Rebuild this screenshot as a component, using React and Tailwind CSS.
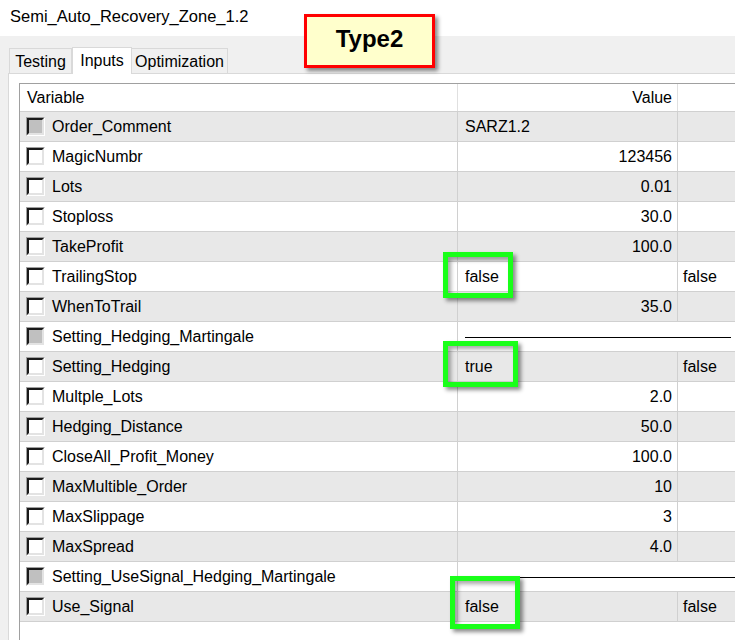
import React from "react";

const rows = [
    { name: "Order_Comment", value: "SARZ1.2", align: "left", disabled: true },
    { name: "MagicNumbr", value: "123456" },
    { name: "Lots", value: "0.01" },
    { name: "Stoploss", value: "30.0" },
    { name: "TakeProfit", value: "100.0" },
    { name: "TrailingStop", value: "false", align: "left", extra: "false" },
    { name: "WhenToTrail", value: "35.0" },
    { name: "Setting_Hedging_Martingale", separator: "pl-[7px] pr-[4px]", disabled: true },
    { name: "Setting_Hedging", value: "true", align: "left", extra: "false" },
    { name: "Multple_Lots", value: "2.0" },
    { name: "Hedging_Distance", value: "50.0" },
    { name: "CloseAll_Profit_Money", value: "100.0" },
    { name: "MaxMultible_Order", value: "10" },
    { name: "MaxSlippage", value: "3" },
    { name: "MaxSpread", value: "4.0" },
    { name: "Setting_UseSignal_Hedging_Martingale", separator: "pl-[10px] pr-0", disabled: true },
    { name: "Use_Signal", value: "false", align: "left", extra: "false" },
];

const CheckBox = ({ disabled }) => (
    <div className="w-[19px] h-[19px] border border-t-[#a0a0a0] border-l-[#a0a0a0] border-b-white border-r-white">
        <div
            className={`w-full h-full border-2 border-t-[#1a1a1a] border-l-[#1a1a1a] border-b-[#e3e3e3] border-r-[#e3e3e3] ${
                disabled ? "bg-[#c0c0c0]" : "bg-white"
            }`}
        />
    </div>
);

const GreenBox = ({ className }) => (
    <div
        className={`absolute border-[5px] border-[#19ff19] shadow-[3px_3px_4px_rgba(0,0,0,0.45),inset_3px_3px_4px_rgba(0,0,0,0.35)] ${className}`}
    />
);

const Row = ({ row, index }) => {
    const bg = index % 2 === 0 ? "bg-[#e8e8e8]" : "bg-white";
    return (
        <div className={`flex h-[30px] border-b border-[#d0d0d0] ${bg}`}>
            <div className="w-[438px] shrink-0 flex items-center gap-[7px] pl-[6px] border-r border-[#d0d0d0]">
                <CheckBox disabled={row.disabled} />
                <span className="whitespace-nowrap">{row.name}</span>
            </div>
            {row.separator ? (
                <div className={`flex-1 flex items-center pt-[2px] ${row.separator}`}>
                    <div className="w-full h-px bg-black" />
                </div>
            ) : (
                <>
                    <div
                        className={`w-[220px] shrink-0 flex items-center border-r border-[#d0d0d0] ${
                            row.align === "left" ? "justify-start pl-[7px]" : "justify-end pr-[5px]"
                        }`}
                    >
                        {row.value}
                    </div>
                    <div className="flex-1 flex items-center pl-[5px]">{row.extra}</div>
                </>
            )}
        </div>
    );
};

const App = () => {
    return (
        <div className="relative w-[735px] h-[640px] overflow-hidden bg-[#f0f0f0] text-[16px] text-black font-['Liberation_Sans',Arial,sans-serif]">
            <div className="h-[36px] bg-white flex items-center pl-[10px] pb-[4px] text-[16.5px]">Semi_Auto_Recovery_Zone_1.2</div>

            <div className="flex items-end pl-[9px] pt-[10px] h-[37px]">
                <div className="w-[63px] h-[25px] border border-b-0 border-[#d9d9d9] flex items-center justify-center pt-[2px]">
                    Testing
                </div>
                <div className="w-[60px] h-[27px] bg-white border border-b-0 border-[#d9d9d9] -mb-px relative z-10 flex items-center justify-center pb-[1px]">
                    Inputs
                </div>
                <div className="w-[96px] h-[25px] border border-b-0 border-l-0 border-[#d9d9d9] flex items-center justify-center pt-[2px]">
                    Optimization
                </div>
            </div>

            <div className="ml-[8px] bg-white border-l border-t border-[#d9d9d9] pl-[10px] pt-[9px] h-[600px]">
                <div className="border-l border-t border-[#a0a0a0] h-full">
                    <div className="flex h-[28px] border-b border-[#d0d0d0]">
                        <div className="w-[438px] shrink-0 flex items-center pl-[7px] border-r border-[#e0e0e0]">Variable</div>
                        <div className="w-[220px] shrink-0 flex items-center justify-end pr-[5px] border-r border-[#e0e0e0]">
                            Value
                        </div>
                        <div className="flex-1" />
                    </div>
                    {rows.map((row, i) => (
                        <Row key={row.name} row={row} index={i} />
                    ))}
                </div>
            </div>

            <div className="absolute left-[304px] top-[14px] w-[131px] h-[54px] bg-[#ffffcc] border-[3px] border-[#ff0000] shadow-[3px_3px_4px_rgba(0,0,0,0.45)] flex items-center justify-center pb-[5px] text-[24px] font-bold">
                Type2
            </div>

            <GreenBox className="left-[443px] top-[252px] w-[70px] h-[46px]" />
            <GreenBox className="left-[443px] top-[341px] w-[75px] h-[46px]" />
            <GreenBox className="left-[450px] top-[576px] w-[70px] h-[53px]" />
        </div>
    );
};

export default App;
